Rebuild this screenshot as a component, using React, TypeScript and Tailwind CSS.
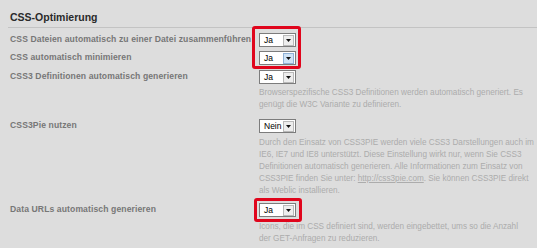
import React from "react";

type SelectProps = { value: string; hover?: boolean };

function Select({ value, hover }: SelectProps) {
  return (
    <div className="w-[37px] h-[14px] border border-[#7c7c7c] bg-white flex items-center">
      <span className="flex-1 pl-[4px] text-[8.5px] leading-[12px] text-black">{value}</span>
      <div
        className={
          hover
            ? "w-[11px] h-[11px] mr-[1px] border border-[#8fb1d6] bg-[#cfe3f6] flex items-center justify-center"
            : "w-[11px] h-[11px] mr-[1px] border border-[#b9b9b9] bg-[#ededed] flex items-center justify-center"
        }
      >
        <svg width="5" height="3" viewBox="0 0 5 3">
          <path d="M0 0H5L2.5 3Z" fill="#111" />
        </svg>
      </div>
    </div>
  );
}

function Label({ children }: { children: React.ReactNode }) {
  return (
    <div className="w-[249px] shrink-0 text-[8.6px] leading-[13px] font-bold text-[#777777] tracking-[0.1px] whitespace-nowrap">
      {children}
    </div>
  );
}

function Hint({ lines }: { lines: React.ReactNode[] }) {
  return (
    <div className="text-[8.2px] leading-[12px] text-[#acacac] whitespace-nowrap">
      {lines.map((l, i) => (
        <div key={i}>{l}</div>
      ))}
    </div>
  );
}

export default function App() {
  return (
    <div className="w-[537px] h-[248px] bg-[#dddddd] overflow-hidden font-['Liberation_Sans',Arial,sans-serif]">
      <div className="pl-[10px] pt-[10px] pb-[3px] text-[10.5px] leading-[14px] font-bold text-[#2a2a2a]">
        CSS-Optimierung
      </div>
      <div className="ml-[8px] h-px bg-[#c3c3c3]" />

      <div className="pl-[10px]">
        {/* Zeile 1 */}
        <div className="flex items-start mt-[5px]">
          <Label>CSS Dateien automatisch zu einer Datei zusammenführen</Label>
          <div className="relative">
            <Select value="Ja" />
            <div className="absolute left-[-7px] top-[-7px] w-[49px] h-[43px] border-[3px] border-[#e0051c] rounded-[3px]" />
          </div>
        </div>

        {/* Zeile 2 */}
        <div className="flex items-start mt-[4px]">
          <Label>CSS automatisch minimieren</Label>
          <Select value="Ja" hover />
        </div>

        {/* Zeile 3 */}
        <div className="flex items-start mt-[5px]">
          <Label>CSS3 Definitionen automatisch generieren</Label>
          <div>
            <Select value="Ja" />
            <div className="mt-[3px]">
              <Hint
                lines={[
                  "Browserspezifische CSS3 Definitionen werden automatisch generiert. Es",
                  "genügt die W3C Variante zu definieren.",
                ]}
              />
            </div>
          </div>
        </div>

        {/* Zeile 4 */}
        <div className="flex items-start mt-[8px]">
          <Label>CSS3Pie nutzen</Label>
          <div>
            <Select value="Nein" />
            <div className="mt-[4px]">
              <Hint
                lines={[
                  "Durch den Einsatz von CSS3PIE werden viele CSS3 Darstellungen auch im",
                  "IE6, IE7 und IE8 unterstützt. Diese Einstellung wirkt nur, wenn Sie CSS3",
                  "Definitionen automatisch generieren. Alle Informationen zum Einsatz von",
                  <>
                    CSS3PIE finden Sie unter: <span className="underline">http://css3pie.com</span>. Sie können CSS3PIE direkt
                  </>,
                  "als Weblic installieren.",
                ]}
              />
            </div>
          </div>
        </div>

        {/* Zeile 5 */}
        <div className="flex items-start mt-[6px]">
          <Label>Data URLs automatisch generieren</Label>
          <div>
            <div className="relative">
              <Select value="Ja" />
              <div className="absolute left-[-5px] top-[-5px] w-[48px] h-[24px] border-[3px] border-[#e0051c] rounded-[3px]" />
            </div>
            <div className="mt-[4px]">
              <Hint
                lines={[
                  "Icons, die im CSS definiert sind, werden eingebettet, ums so die Anzahl",
                  "der GET-Anfragen zu reduzieren.",
                ]}
              />
            </div>
          </div>
        </div>
      </div>
    </div>
  );
}
